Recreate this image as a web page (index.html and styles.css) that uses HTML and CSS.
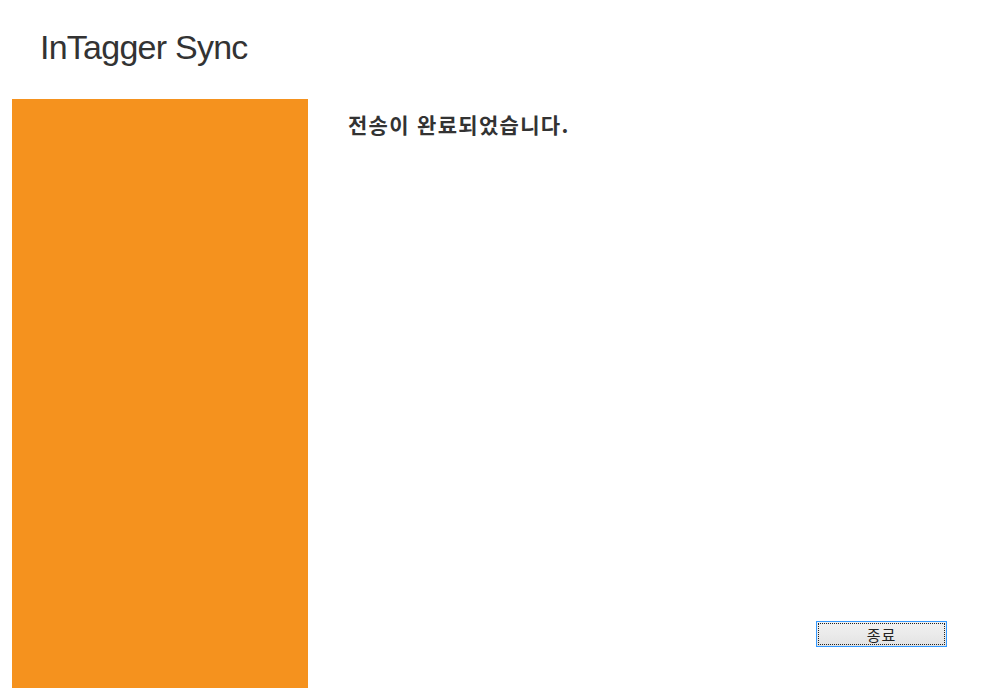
FILE: index.html
```html
<!DOCTYPE html>
<html lang="ko">
<head>
<meta charset="utf-8">
<link rel="stylesheet" href="styles.css">
</head>
<body>
<header class="app-header"><h1 class="app-title">InTagger Sync</h1></header>
<div class="app-body">
  <aside class="side-panel"></aside>
  <main class="content">
    <h2 class="status">전송이 완료되었습니다.</h2>
    <div class="actions">
      <button class="btn" type="button"><span class="btn-label">종료</span></button>
    </div>
  </main>
</div>
</body>
</html>
```
FILE: styles.css
```css
html, body {
  margin: 0;
  padding: 0;
  background: #ffffff;
  width: 1004px;
  height: 700px;
  overflow: hidden;
  font-family: "Liberation Sans", Arial, "Noto Sans CJK KR", sans-serif;
  color: #333333;
}
.app-header {
  height: 99px;
  padding-left: 40px;
  box-sizing: border-box;
}
.app-title {
  margin: 0;
  padding-top: 30px;
  font-size: 34px;
  font-weight: normal;
  line-height: 34px;
  letter-spacing: -0.75px;
  color: #333333;
}
.app-body {
  display: flex;
  height: 589px;
}
.side-panel {
  margin-left: 12px;
  width: 296px;
  background: #f5921e;
}
.content {
  flex: 1;
  display: flex;
  flex-direction: column;
  padding: 12px 57px 41px 40px;
}
.status {
  margin: 0;
  font-family: "Noto Sans CJK KR", "Liberation Sans", sans-serif;
  font-size: 21px;
  font-weight: bold;
  line-height: 26px;
  letter-spacing: 1.3px;
  color: #333333;
}
.actions {
  margin-top: auto;
  display: flex;
  justify-content: flex-end;
}
.btn {
  width: 131px;
  height: 26px;
  padding: 1px;
  border: 1px solid #3399ff;
  background: linear-gradient(#f2f2f2, #e3e3e3);
  font-family: "Noto Sans CJK KR", sans-serif;
  font-size: 15px;
  color: #222222;
  box-sizing: border-box;
  display: flex;
}
.btn-label {
  flex: 1;
  border: 1px dotted #222222;
  display: flex;
  align-items: center;
  justify-content: center;
  line-height: 1;
  letter-spacing: 1px;
}
```
